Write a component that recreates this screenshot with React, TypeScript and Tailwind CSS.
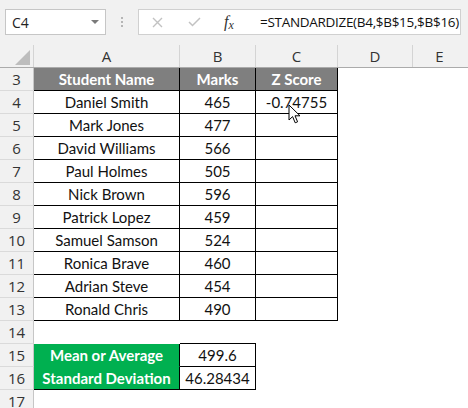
import React from "react";

type Cell = {
  text?: string;
  kind?: "head" | "green" | "box" | "plain";
  bottom?: boolean;
};

// widths of columns A..D; E takes the rest
const widths = ["w-[146px]", "w-[76px]", "w-[82px]", "w-[75px]"];

const students: [string, string][] = [
  ["Daniel Smith", "465"],
  ["Mark Jones", "477"],
  ["David Williams", "566"],
  ["Paul Holmes", "505"],
  ["Nick Brown", "596"],
  ["Patrick Lopez", "459"],
  ["Samuel Samson", "524"],
  ["Ronica Brave", "460"],
  ["Adrian Steve", "454"],
  ["Ronald Chris", "490"],
];

const rows: { n: number; cells: Cell[] }[] = [
  {
    n: 3,
    cells: [
      { text: "Student Name", kind: "head" },
      { text: "Marks", kind: "head" },
      { text: "Z Score", kind: "head" },
    ],
  },
  ...students.map(([name, mark], i) => ({
    n: i + 4,
    cells: [
      { text: name, kind: "box" as const },
      { text: mark, kind: "box" as const },
      { text: i === 0 ? "-0.74755" : "", kind: "box" as const },
    ],
  })),
  { n: 14, cells: [{}, { bottom: true }] },
  {
    n: 15,
    cells: [
      { text: "Mean or Average", kind: "green" },
      { text: "499.6", kind: "box" },
    ],
  },
  {
    n: 16,
    cells: [
      { text: "Standard Deviation", kind: "green", bottom: true },
      { text: "46.28434", kind: "box" },
    ],
  },
  { n: 17, cells: [] },
];

function SheetCell({ cell, width }: { cell?: Cell; width: string }) {
  const kind = cell?.kind ?? "plain";
  let cls = "";
  if (kind === "head") cls = "bg-[#7f7f7f] text-white font-bold border-r border-b border-black";
  if (kind === "box") cls = "bg-white text-[#111] border-r border-b border-black";
  if (kind === "green")
    cls = `bg-[#00b050] text-white font-bold border-r border-black ${cell?.bottom ? "border-b border-b-black" : "border-b border-b-[#00b050]"}`;
  if (kind === "plain") cls = cell?.bottom ? "border-b border-black" : "";
  return (
    <div className={`${width} h-[23px] shrink-0 flex items-center justify-center whitespace-nowrap ${cls}`}>
      {cell?.text}
    </div>
  );
}

function Cursor() {
  return (
    <svg className="absolute left-[288px] top-[104px]" width="13" height="21" viewBox="0 0 13 21">
      <path
        d="M1 1 L1 16 L4.6 12.6 L7.2 18.8 L9.6 17.8 L7 11.8 L12 11.8 Z"
        fill="#fff"
        stroke="#000"
        strokeWidth="1"
        strokeLinejoin="round"
      />
    </svg>
  );
}

export default function App() {
  return (
    <div className="relative w-[468px] h-[408px] overflow-hidden bg-white font-['Lato',sans-serif] text-[15px]">
      {/* formula bar */}
      <div className="h-[45px] bg-[#f1f1f1] flex items-start pt-[9px] pl-[5px] font-['Open_Sans',sans-serif]">
        <div className="w-[101px] h-[26px] shrink-0 bg-white border border-[#c6c6c6] flex items-center justify-between pl-[6px] pr-[6px]">
          <span className="text-[14px] text-[#222]">C4</span>
          <span className="w-0 h-0 border-l-[4px] border-r-[4px] border-t-[4px] border-l-transparent border-r-transparent border-t-[#7a7a7a]" />
        </div>
        <div className="w-[32px] h-[26px] shrink-0 flex flex-col items-center justify-center gap-[2px]">
          <span className="w-[2px] h-[2px] bg-[#b5b5b5]" />
          <span className="w-[2px] h-[2px] bg-[#b5b5b5]" />
          <span className="w-[2px] h-[2px] bg-[#b5b5b5]" />
        </div>
        <div className="w-[323px] h-[26px] shrink-0 bg-white border border-[#d0d0d0] flex items-center overflow-hidden">
          <div className="w-[37px] shrink-0 flex justify-center">
            <svg width="11" height="11" viewBox="0 0 11 11">
              <path d="M1 1 L10 10 M10 1 L1 10" stroke="#c2c2c2" strokeWidth="1.4" />
            </svg>
          </div>
          <div className="w-[36px] shrink-0 flex justify-center">
            <svg width="13" height="10" viewBox="0 0 13 10">
              <path d="M1 5 L4.5 8.5 L12 1" stroke="#c2c2c2" strokeWidth="1.5" fill="none" />
            </svg>
          </div>
          <div className="w-[34px] shrink-0 flex justify-center font-['Liberation_Serif',serif] italic text-[16px] text-[#333]">
            f<span className="text-[12px] self-end">x</span>
          </div>
          <div className="pl-[14px] shrink-0 text-[13.5px] text-[#111] tracking-[-0.3px] whitespace-nowrap">
            =STANDARDIZE(B4,$B$15,$B$16)
          </div>
        </div>
      </div>

      {/* column headers */}
      <div className="flex h-[23px] bg-[#f1f1f1] border-b border-[#ababab] font-['Open_Sans',sans-serif] text-[15px] text-[#333]">
        <div className="w-[34px] shrink-0 border-r border-[#d4d4d4] flex items-end justify-end pr-[3px] pb-[2px]">
          <svg width="15" height="15" viewBox="0 0 15 15">
            <path d="M15 0 L15 15 L0 15 Z" fill="#bdbdbd" />
          </svg>
        </div>
        {["A", "B", "C", "D"].map((c, i) => (
          <div key={c} className={`${widths[i]} shrink-0 border-r border-[#d4d4d4] flex items-center justify-center`}>
            {c}
          </div>
        ))}
        <div className="flex-1 flex items-center justify-center pr-[2px]">E</div>
      </div>

      {/* sheet rows */}
      {rows.map((row) => (
        <div key={row.n} className="flex">
          <div className="w-[34px] h-[23px] shrink-0 bg-[#f1f1f1] border-r border-b border-r-[#c6c6c6] border-b-[#dadada] flex items-center justify-center font-['Open_Sans',sans-serif] text-[15px] text-[#333]">
            {row.n}
          </div>
          {widths.map((w, i) => (
            <SheetCell key={i} cell={row.cells[i]} width={w} />
          ))}
        </div>
      ))}

      <Cursor />
    </div>
  );
}
